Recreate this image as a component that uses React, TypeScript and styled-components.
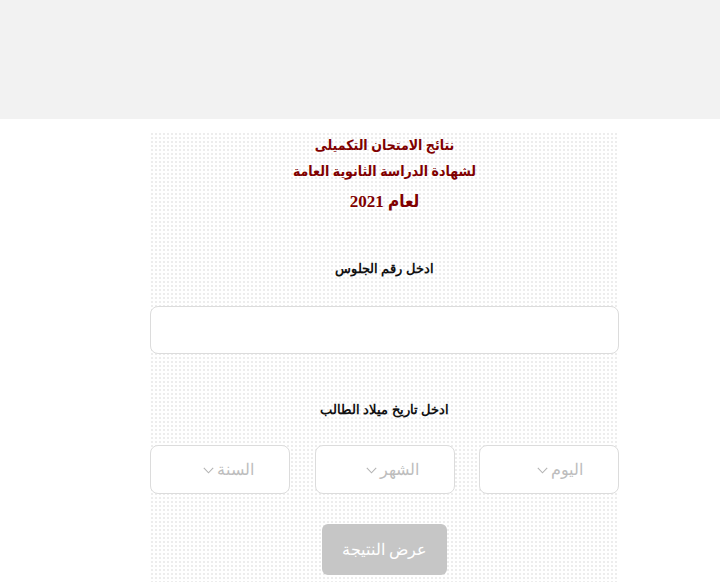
import React from "react";
import styled, { createGlobalStyle } from "styled-components";

const Global = createGlobalStyle`
  html, body { margin: 0; padding: 0; background: #ffffff; }
  body { font-family: "Liberation Sans", Arial, sans-serif; }
  * { box-sizing: border-box; }
`;

const TopBar = styled.header`
  height: 119px;
  background: #f2f2f2;
`;

const Card = styled.main`
  margin: 13px 0 0 150px;
  width: 469px;
  padding-bottom: 12px;
  direction: rtl;
  text-align: center;
  background-color: #ffffff;
  background-image: radial-gradient(circle, #ededed 0.8px, transparent 0.9px);
  background-size: 4px 4px;
`;

const Title = styled.h1`
  margin: 0;
  padding-top: 1px;
  font-family: "Liberation Serif", "DejaVu Sans Condensed", "DejaVu Sans", serif;
  font-weight: bold;
  font-size: 14px;
  line-height: 26px;
  color: #800000;
`;

const Year = styled.div`
  margin-top: 4px;
  font-family: "Liberation Serif", "DejaVu Sans Condensed", "DejaVu Sans", serif;
  font-weight: bold;
  font-size: 17px;
  line-height: 26px;
  color: #800000;
`;

const Label = styled.div<{ $top: number }>`
  margin-top: ${(p) => p.$top}px;
  font-family: "Liberation Sans", Arial, sans-serif;
  font-weight: bold;
  font-size: 13px;
  line-height: 20px;
  color: #111111;
`;

const Input = styled.input`
  display: block;
  margin-top: 27px;
  width: 100%;
  height: 48px;
  border: 1px solid #dcdcdc;
  border-radius: 8px;
  background: #ffffff;
  outline: none;
`;

const SelectRow = styled.div`
  margin-top: 25px;
  display: grid;
  grid-template-columns: repeat(3, 140px);
  justify-content: space-between;
`;

const SelectBox = styled.div`
  height: 49px;
  border: 1px solid #dcdcdc;
  border-radius: 8px;
  background: #ffffff;
  display: flex;
  align-items: center;
  gap: 3px;
  padding-right: 35px;
  font-family: "Liberation Sans", Arial, sans-serif;
  font-size: 16px;
  color: #bdbdbd;
`;

const Chevron = styled.svg`
  width: 11px;
  height: 7px;
  margin-top: 1px;
`;

const Button = styled.button`
  display: block;
  margin: 30px auto 0;
  width: 125px;
  height: 51px;
  border: none;
  border-radius: 6px;
  background: #c6c6c6;
  color: #ffffff;
  font-family: "Liberation Sans", Arial, sans-serif;
  font-size: 16px;
`;

const Select = ({ label }: { label: string }) => (
  <SelectBox>
    <span>{label}</span>
    <Chevron viewBox="0 0 11 7">
      <polyline points="0.8,0.8 5.5,5.8 10.2,0.8" fill="none" stroke="#b4b4b4" strokeWidth="1.1" />
    </Chevron>
  </SelectBox>
);

export default function App() {
  return (
    <>
      <Global />
      <TopBar />
      <Card>
        <Title>
          نتائج الامتحان التكميلى
          <br />
          لشهادة الدراسة الثانوية العامة
        </Title>
        <Year>لعام 2021</Year>
        <Label $top={44}>ادخل رقم الجلوس</Label>
        <Input type="text" />
        <Label $top={46}>ادخل تاريخ ميلاد الطالب</Label>
        <SelectRow>
          <Select label="اليوم" />
          <Select label="الشهر" />
          <Select label="السنة" />
        </SelectRow>
        <Button>عرض النتيجة</Button>
      </Card>
    </>
  );
}
